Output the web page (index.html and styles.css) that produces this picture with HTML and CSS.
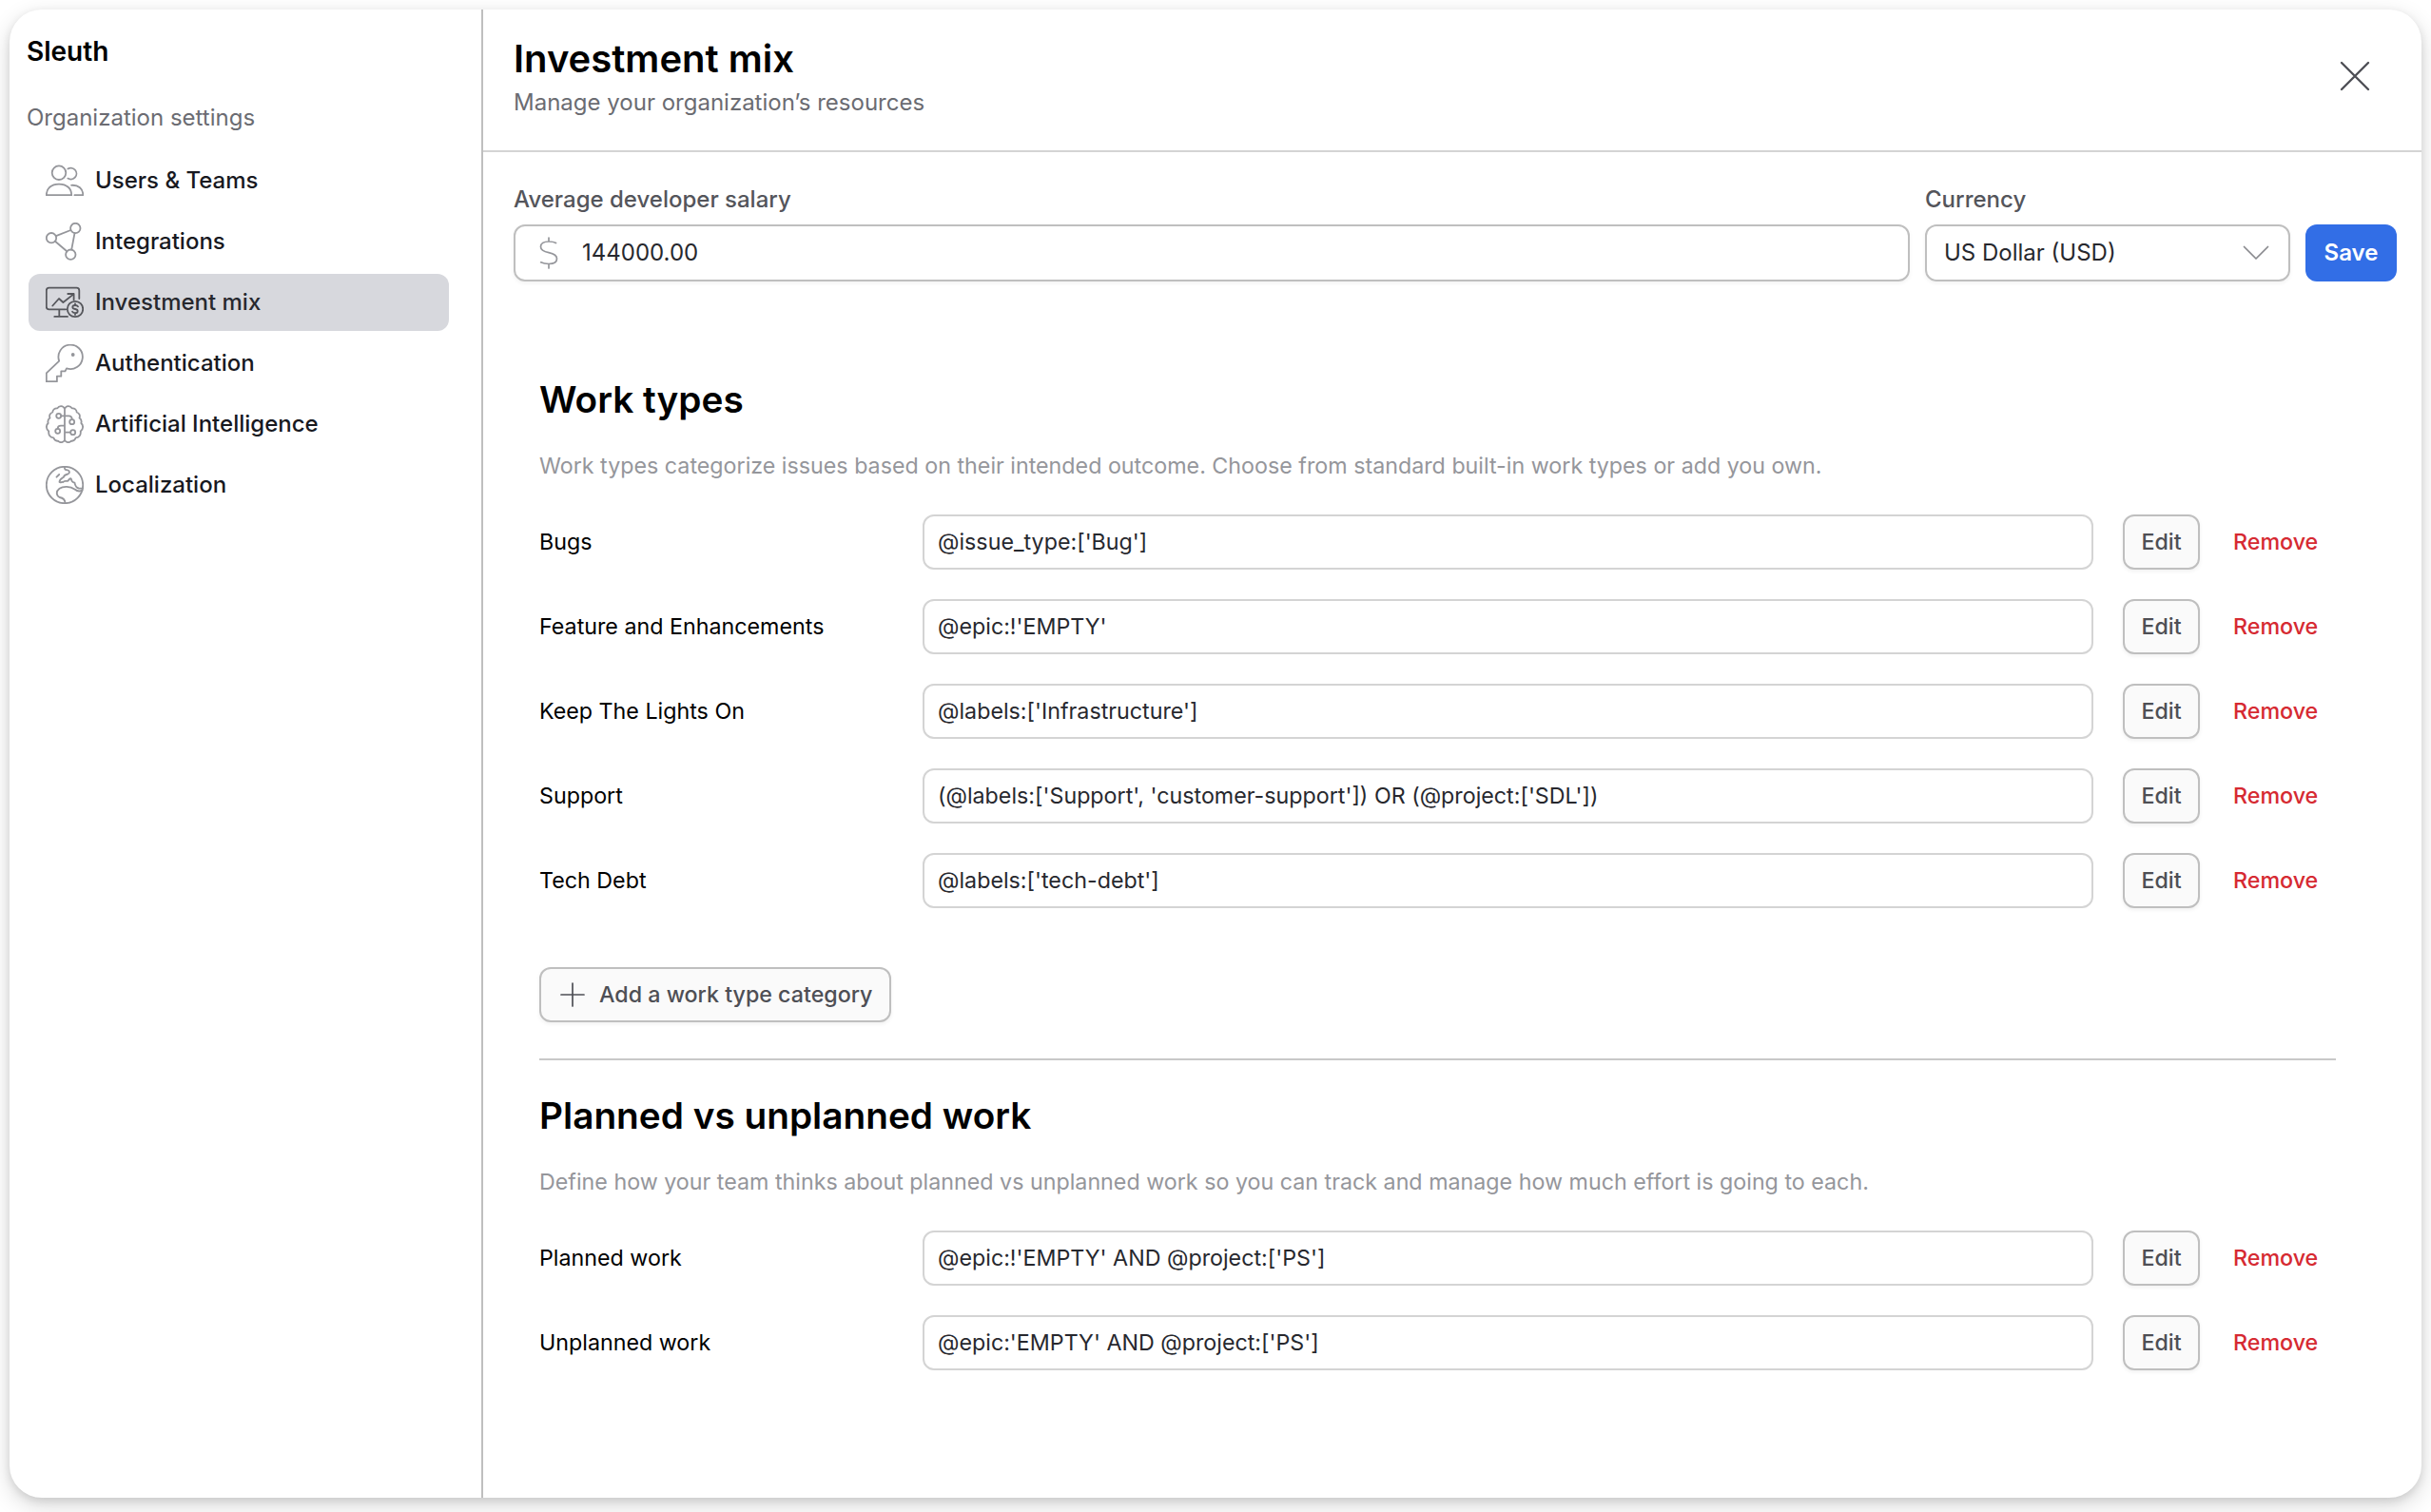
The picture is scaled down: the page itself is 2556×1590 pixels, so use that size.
FILE: index.html
```html
<!DOCTYPE html>
<html lang="en">
<head>
<meta charset="utf-8">
<title>Investment mix</title>
<link rel="stylesheet" href="styles.css">
</head>
<body>
<div class="panel">
  <aside class="sidebar">
    <div class="brand">Sleuth</div>
    <div class="group">Organization settings</div>
    <nav class="nav">
      <a class="nav-item">
        <svg class="icon" viewBox="0 0 40 40"><circle cx="14" cy="11.7" r="7.3"/><path d="M.8 35.2c0-7 5-11.6 13.2-11.6s13.2 4.6 13.2 11.6zM23.4 7.6A5.9 5.9 0 1 1 23.4 17.600M27 24.800c7.500-.6 12.300 3.800 12.300 10.400H30.400"/></svg>
        <span>Users &amp; Teams</span></a>
      <a class="nav-item">
        <svg class="icon" viewBox="0 0 40 40"><circle cx="31.300" cy="6" r="5.200"/><circle cx="6" cy="16.200" r="5.200"/><circle cx="26.300" cy="33.700" r="5.200"/><path d="M10.900 14.200 26.400 8M30.500 11.200 27.200 28.600M10 19.700 22.300 30.300"/></svg>
        <span>Integrations</span></a>
      <a class="nav-item active">
        <svg class="icon" viewBox="0 0 40 40"><path d="M35.300 16V7.500q0-2.800-2.800-2.800H3.600Q.8 4.700.8 7.500v17q0 2.800 2.800 2.800h17.600M14.300 27.300v7.400M9.300 34.900H23M7.300 23.500l6.700-7.500 4.400 4 10.900-8.600M23.300 11H29.600V17.300"/><circle cx="31" cy="27" r="8.200"/><path d="M34 24.400q-.8-1.400-3-1.400-2.700 0-2.700 2 0 1.600 2.700 2t2.700 2.200q0 2-2.700 2-2.200 0-3-1.500M31 21.300V23M31 31.200v1.700"/></svg>
        <span>Investment mix</span></a>
      <a class="nav-item">
        <svg class="icon" viewBox="0 0 40 40"><path d="M14.200 17.600A12.700 12.700 0 1 1 22 25.300L20.500 28.300H16.300V33.700H11.900V39.200H.8V30.400z"/><circle cx="28.700" cy="11" r="1" class="dot"/></svg>
        <span>Authentication</span></a>
      <a class="nav-item">
        <svg class="icon" viewBox="0 0 40 40"><path d="M20 3.800C18.500.4 14.200 0 12.300 3.400 9.500 3 7.400 5 7.300 7.500 4.500 8.500 3.500 11 4.500 13.600 2.500 15 2 17 2.700 19 .2 21 .2 25.500 3.300 27.400c-.6 4 1.400 6.800 5 6.900C9.300 37.300 11 38 13 37.700c2 2.300 5.500 1.900 7-.8 1.500 2.700 5 3.100 7 .8 2 .3 3.700-.4 4.700-3.400 3.600-.1 5.600-2.900 5-6.900 3.100-1.900 3.100-6.400.6-8.400.7-2 .2-4-1.800-5.400 1-2.600 0-5.100-2.800-6.100-.1-2.500-2.200-4.500-5-4.100C25.800 0 21.500.4 20 3.800zV37M16.300 11.300h8q3.400 0 3.400 3.700M12.700 24.600q0-2.900 3.200-2.900H20M20 28.700h6"/><circle cx="13.700" cy="11.300" r="2.500"/><circle cx="27.700" cy="17.700" r="2.500"/><circle cx="12.700" cy="27.300" r="2.500"/><circle cx="28.700" cy="28.700" r="2.500"/></svg>
        <span>Artificial Intelligence</span></a>
      <a class="nav-item">
        <svg class="icon" viewBox="0 0 40 40"><circle cx="20" cy="20" r="19.200"/><path d="M11.500 11.700 14.200 9M20 1.200c-.5 2.600 1 3 3 3.200 2.500.4 2.600 3.400.3 4.100-2.600.6-4 1.200-4.300 3.200-1.800 1.300-4.600 2.600-4.500 5.200 1.300 1.500 2.300-.6 3.800.2 1.400-2.400 3.400-.5 5.200-1.500 1.400-1.600 2.500-3.400 3.500-1.600.2 2.300 1.500 3.400 3.500 3.600.4 2.600 1.500 5.300 4.300 5.900l4.200.2M38.500 25.600c-3.800 2.300-6 .5-8-1.100-4.600-3.200-12-3.400-16-.8-3.600 2.700-3.800 7 .2 9.300 3.300.6 5.700 2 5.800 6"/></svg>
        <span>Localization</span></a>
    </nav>
  </aside>
  <main class="main">
    <header class="header">
      <div>
        <h1>Investment mix</h1>
        <p>Manage your organization’s resources</p>
      </div>
      <svg class="close" viewBox="0 0 32 32"><path d="M2 2 30 30M30 2 2 30"/></svg>
    </header>
    <form class="salary">
      <label class="field grow"><span class="label">Average developer salary</span>
        <div class="control"><svg class="dollar" viewBox="0 0 20 34"><path d="M17.500 6.500C15.500 5.400 13 5 10 5 4.500 5 1.500 7.300 1.500 10.500c0 3.600 3 5 8.500 6.200s8.500 2.800 8.500 6.300c0 3.700-3 5.500-8.500 5.500-3.500 0-6-.5-8.300-1.700M10 1v4M10 28.500V33"/></svg><span>144000.00</span></div></label>
      <label class="field currency"><span class="label">Currency</span>
        <div class="control"><span>US Dollar (USD)</span><svg class="chevron" viewBox="0 0 28 16"><path d="M1.500 1.500 14 14 26.500 1.500"/></svg></div></label>
      <button type="button" class="save">Save</button>
    </form>
    <section class="section">
      <h2>Work types</h2>
      <p class="hint">Work types categorize issues based on their intended outcome. Choose from standard built-in work types or add you own.</p>
      <div class="rows">
        <div class="row"><span class="name">Bugs</span><div class="rule">@issue_type:['Bug']</div><button class="edit">Edit</button><a class="remove">Remove</a></div>
        <div class="row"><span class="name">Feature and Enhancements</span><div class="rule">@epic:!'EMPTY'</div><button class="edit">Edit</button><a class="remove">Remove</a></div>
        <div class="row"><span class="name">Keep The Lights On</span><div class="rule">@labels:['Infrastructure']</div><button class="edit">Edit</button><a class="remove">Remove</a></div>
        <div class="row"><span class="name">Support</span><div class="rule">(@labels:['Support', 'customer-support']) OR (@project:['SDL'])</div><button class="edit">Edit</button><a class="remove">Remove</a></div>
        <div class="row"><span class="name">Tech Debt</span><div class="rule">@labels:['tech-debt']</div><button class="edit">Edit</button><a class="remove">Remove</a></div>
      </div>
      <button type="button" class="add"><svg class="plus" viewBox="0 0 26 26"><path d="M13 1V25M1 13H25"/></svg><span>Add a work type category</span></button>
    </section>
    <section class="section planned">
      <h2>Planned vs unplanned work</h2>
      <p class="hint">Define how your team thinks about planned vs unplanned work so you can track and manage how much effort is going to each.</p>
      <div class="rows">
        <div class="row"><span class="name">Planned work</span><div class="rule">@epic:!'EMPTY' AND @project:['PS']</div><button class="edit">Edit</button><a class="remove">Remove</a></div>
        <div class="row"><span class="name">Unplanned work</span><div class="rule">@epic:'EMPTY' AND @project:['PS']</div><button class="edit">Edit</button><a class="remove">Remove</a></div>
      </div>
    </section>
  </main>
</div>
</body>
</html>
```
FILE: styles.css
```css
* { box-sizing: border-box; }
html, body { height: 100%; margin: 0; }
body {
  padding: 10px 10px 15px;
  overflow: hidden;
  background: #fff;
  color: #000;
  font: 400 24px/32px Inter, "Liberation Sans", sans-serif;
  font-optical-sizing: none;
}
h1, h2, p { margin: 0; }
button { font: inherit; }
svg { flex: none; fill: none; stroke: currentColor; stroke-linecap: round; stroke-linejoin: round; }

.panel {
  display: flex;
  height: 1565px;
  border-radius: 34px;
  background: #fff;
  box-shadow: 0 8px 24px rgba(0, 0, 0, .16), 0 3px 8px rgba(0, 0, 0, .1);
}

.sidebar { width: 498px; border-right: 2px solid #bfbfbf; padding: 28px 34px 0 20px; }
.brand { margin-left: -2px; font-size: 28px; font-weight: 600; }
.group { margin: 38px 0 0 -2px; color: #6b6c72; }
.nav { display: flex; flex-direction: column; gap: 4px; margin-top: 20px; }
.nav-item {
  display: flex;
  align-items: center;
  gap: 12px;
  height: 60px;
  padding-left: 18px;
  border-radius: 12px;
  color: #18191f;
  font-weight: 500;
}
.nav-item.active { background: #d7d8dd; color: #27282e; }
.icon { width: 40px; height: 40px; stroke-width: 1.8; color: #95969b; }
.active .icon { color: #56575c; }
.dot { fill: currentColor; }

.main { flex: 1; }
.header {
  display: flex;
  justify-content: space-between;
  height: 150px;
  padding: 28px 54px 0 32px;
  border-bottom: 2px solid #d4d4d4;
}
h1 { font-size: 40px; line-height: 48px; font-weight: 600; }
.header p { margin-top: 6px; color: #6b6c72; }
.close { width: 32px; height: 32px; margin-top: 26px; stroke-width: 2.4; color: #4e4f55; }

.salary { display: flex; align-items: flex-end; gap: 16px; height: 136px; padding: 0 26px 0 32px; }
.field { display: flex; flex-direction: column; gap: 10px; }
.grow { flex: 1; }
.currency { width: 384px; }
.label { color: #54555b; font-weight: 500; }
.control {
  display: flex;
  align-items: center;
  height: 60px;
  padding: 0 20px 0 25px;
  border: 2px solid #bfbfbf;
  border-radius: 12px;
  box-shadow: 0 2px 4px rgba(0, 0, 0, .05);
  color: #27282e;
}
.currency .control { justify-content: space-between; padding-left: 18px; }
.dollar { width: 20px; height: 34px; margin-right: 25px; stroke-width: 1.7; color: #95969b; }
.chevron { width: 28px; height: 16px; stroke-width: 1.7; color: #88898e; }
.save { width: 96px; height: 60px; padding: 0; border: 0; border-radius: 12px; background: #326ee6; color: #fff; font-weight: 600; }

.section { margin: 100px 90px 0 59px; font-size: 23.25px; }
h2 { font-size: 38.75px; line-height: 48px; font-weight: 600; }
.hint { margin-top: 30px; color: #95969b; }
.rows { display: flex; flex-direction: column; gap: 31px; margin-top: 35px; }
.row { display: flex; align-items: center; height: 58px; }
.name { width: 403px; }
.rule {
  display: flex;
  align-items: center;
  width: 1231px;
  height: 58px;
  padding-left: 14px;
  border: 2px solid #d4d4d4;
  border-radius: 12px;
  color: #27282e;
}
.edit, .add {
  border: 2px solid #bfbfbf;
  border-radius: 12px;
  background: #fafafa;
  box-shadow: 0 2px 4px rgba(0, 0, 0, .06);
  color: #4e4f55;
  font-weight: 500;
}
.edit { width: 81px; height: 58px; margin-left: 31px; padding: 0; }
.remove { margin-left: 35px; color: #d62a32; font-weight: 500; }
.add { display: flex; align-items: center; gap: 15px; width: 370px; height: 58px; margin-top: 62px; padding: 0 0 0 20px; }
.plus { width: 26px; height: 26px; stroke-width: 1.7; }
.planned { margin-top: 38px; padding-top: 34px; border-top: 2px solid #c8c8c8; }
```
